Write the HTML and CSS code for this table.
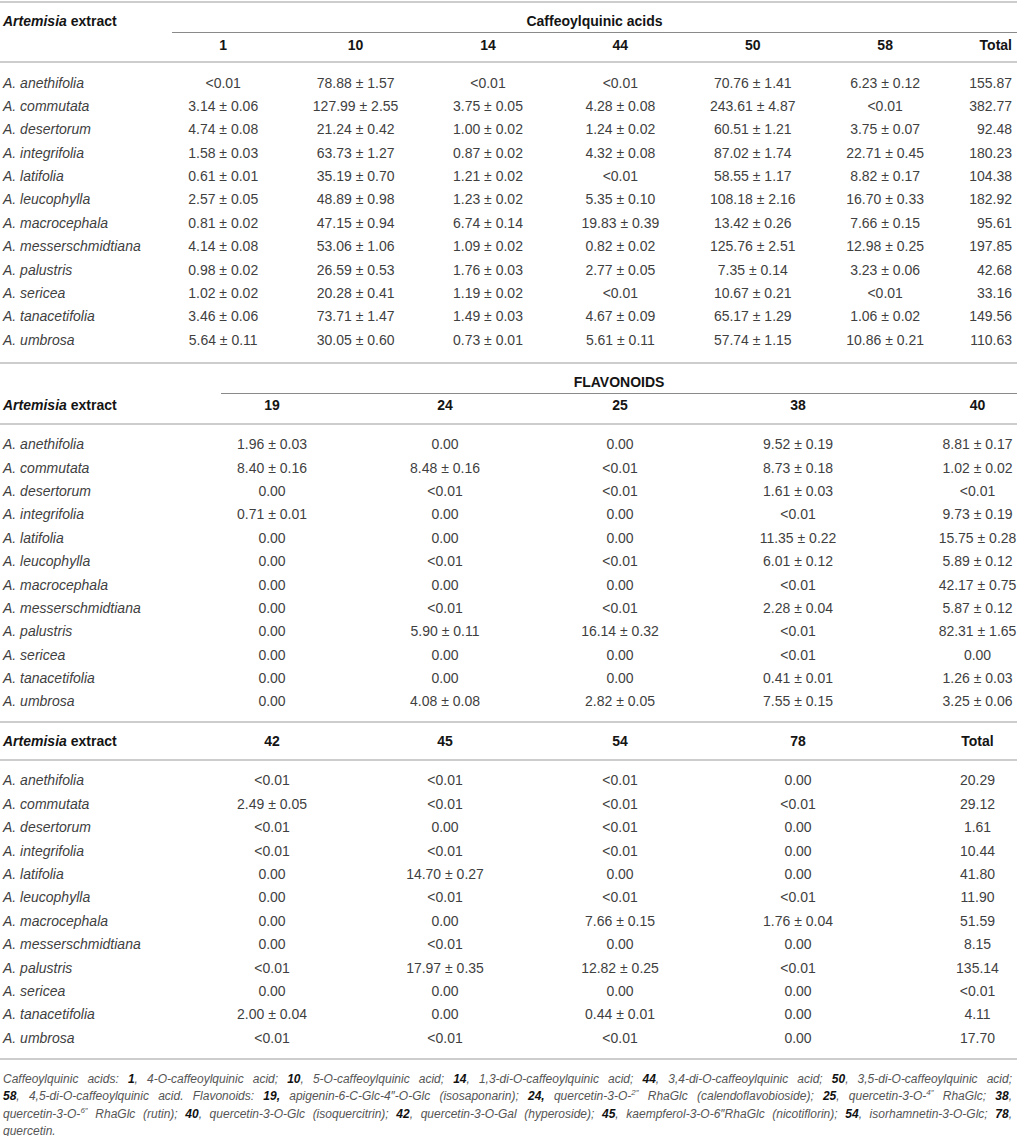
FILE: index.html
```html
<!DOCTYPE html>
<html lang="en">
<head>
<meta charset="utf-8">
<title>Artemisia extract – Caffeoylquinic acids and flavonoids</title>
<link rel="stylesheet" href="styles.css">
</head>
<body>
<div class="wrap">

  <section class="sec sec1">
    <div class="grp-row g-c">
      <div class="hname"><i>Artemisia</i> extract</div>
      <div class="grp">Caffeoylquinic acids</div>
    </div>
    <div class="hrow g1 h-c">
      <span class="name"></span><span>1</span><span>10</span><span>14</span><span>44</span><span>50</span><span>58</span><span class="tot">Total</span>
    </div>
    <div class="body b1">
      <div class="row g1"><span class="name">A. anethifolia</span><span>&lt;0.01</span><span>78.88 ± 1.57</span><span>&lt;0.01</span><span>&lt;0.01</span><span>70.76 ± 1.41</span><span>6.23 ± 0.12</span><span class="tot">155.87</span></div>
      <div class="row g1"><span class="name">A. commutata</span><span>3.14 ± 0.06</span><span>127.99 ± 2.55</span><span>3.75 ± 0.05</span><span>4.28 ± 0.08</span><span>243.61 ± 4.87</span><span>&lt;0.01</span><span class="tot">382.77</span></div>
      <div class="row g1"><span class="name">A. desertorum</span><span>4.74 ± 0.08</span><span>21.24 ± 0.42</span><span>1.00 ± 0.02</span><span>1.24 ± 0.02</span><span>60.51 ± 1.21</span><span>3.75 ± 0.07</span><span class="tot">92.48</span></div>
      <div class="row g1"><span class="name">A. integrifolia</span><span>1.58 ± 0.03</span><span>63.73 ± 1.27</span><span>0.87 ± 0.02</span><span>4.32 ± 0.08</span><span>87.02 ± 1.74</span><span>22.71 ± 0.45</span><span class="tot">180.23</span></div>
      <div class="row g1"><span class="name">A. latifolia</span><span>0.61 ± 0.01</span><span>35.19 ± 0.70</span><span>1.21 ± 0.02</span><span>&lt;0.01</span><span>58.55 ± 1.17</span><span>8.82 ± 0.17</span><span class="tot">104.38</span></div>
      <div class="row g1"><span class="name">A. leucophylla</span><span>2.57 ± 0.05</span><span>48.89 ± 0.98</span><span>1.23 ± 0.02</span><span>5.35 ± 0.10</span><span>108.18 ± 2.16</span><span>16.70 ± 0.33</span><span class="tot">182.92</span></div>
      <div class="row g1"><span class="name">A. macrocephala</span><span>0.81 ± 0.02</span><span>47.15 ± 0.94</span><span>6.74 ± 0.14</span><span>19.83 ± 0.39</span><span>13.42 ± 0.26</span><span>7.66 ± 0.15</span><span class="tot">95.61</span></div>
      <div class="row g1"><span class="name">A. messerschmidtiana</span><span>4.14 ± 0.08</span><span>53.06 ± 1.06</span><span>1.09 ± 0.02</span><span>0.82 ± 0.02</span><span>125.76 ± 2.51</span><span>12.98 ± 0.25</span><span class="tot">197.85</span></div>
      <div class="row g1"><span class="name">A. palustris</span><span>0.98 ± 0.02</span><span>26.59 ± 0.53</span><span>1.76 ± 0.03</span><span>2.77 ± 0.05</span><span>7.35 ± 0.14</span><span>3.23 ± 0.06</span><span class="tot">42.68</span></div>
      <div class="row g1"><span class="name">A. sericea</span><span>1.02 ± 0.02</span><span>20.28 ± 0.41</span><span>1.19 ± 0.02</span><span>&lt;0.01</span><span>10.67 ± 0.21</span><span>&lt;0.01</span><span class="tot">33.16</span></div>
      <div class="row g1"><span class="name">A. tanacetifolia</span><span>3.46 ± 0.06</span><span>73.71 ± 1.47</span><span>1.49 ± 0.03</span><span>4.67 ± 0.09</span><span>65.17 ± 1.29</span><span>1.06 ± 0.02</span><span class="tot">149.56</span></div>
      <div class="row g1"><span class="name">A. umbrosa</span><span>5.64 ± 0.11</span><span>30.05 ± 0.60</span><span>0.73 ± 0.01</span><span>5.61 ± 0.11</span><span>57.74 ± 1.15</span><span>10.86 ± 0.21</span><span class="tot">110.63</span></div>
    </div>
  </section>

  <section class="sec sec2">
    <div class="grp-row g-f">
      <div class="hname"></div>
      <div class="grp">FLAVONOIDS</div>
    </div>
    <div class="hrow g2 h-f">
      <span class="name"><i>Artemisia</i> extract</span><span>19</span><span>24</span><span>25</span><span>38</span><span class="last">40</span>
    </div>
    <div class="body b2">
      <div class="row g2"><span class="name">A. anethifolia</span><span>1.96 ± 0.03</span><span>0.00</span><span>0.00</span><span>9.52 ± 0.19</span><span class="last">8.81 ± 0.17</span></div>
      <div class="row g2"><span class="name">A. commutata</span><span>8.40 ± 0.16</span><span>8.48 ± 0.16</span><span>&lt;0.01</span><span>8.73 ± 0.18</span><span class="last">1.02 ± 0.02</span></div>
      <div class="row g2"><span class="name">A. desertorum</span><span>0.00</span><span>&lt;0.01</span><span>&lt;0.01</span><span>1.61 ± 0.03</span><span class="last">&lt;0.01</span></div>
      <div class="row g2"><span class="name">A. integrifolia</span><span>0.71 ± 0.01</span><span>0.00</span><span>0.00</span><span>&lt;0.01</span><span class="last">9.73 ± 0.19</span></div>
      <div class="row g2"><span class="name">A. latifolia</span><span>0.00</span><span>0.00</span><span>0.00</span><span>11.35 ± 0.22</span><span class="last">15.75 ± 0.28</span></div>
      <div class="row g2"><span class="name">A. leucophylla</span><span>0.00</span><span>&lt;0.01</span><span>&lt;0.01</span><span>6.01 ± 0.12</span><span class="last">5.89 ± 0.12</span></div>
      <div class="row g2"><span class="name">A. macrocephala</span><span>0.00</span><span>0.00</span><span>0.00</span><span>&lt;0.01</span><span class="last">42.17 ± 0.75</span></div>
      <div class="row g2"><span class="name">A. messerschmidtiana</span><span>0.00</span><span>&lt;0.01</span><span>&lt;0.01</span><span>2.28 ± 0.04</span><span class="last">5.87 ± 0.12</span></div>
      <div class="row g2"><span class="name">A. palustris</span><span>0.00</span><span>5.90 ± 0.11</span><span>16.14 ± 0.32</span><span>&lt;0.01</span><span class="last">82.31 ± 1.65</span></div>
      <div class="row g2"><span class="name">A. sericea</span><span>0.00</span><span>0.00</span><span>0.00</span><span>&lt;0.01</span><span class="last">0.00</span></div>
      <div class="row g2"><span class="name">A. tanacetifolia</span><span>0.00</span><span>0.00</span><span>0.00</span><span>0.41 ± 0.01</span><span class="last">1.26 ± 0.03</span></div>
      <div class="row g2"><span class="name">A. umbrosa</span><span>0.00</span><span>4.08 ± 0.08</span><span>2.82 ± 0.05</span><span>7.55 ± 0.15</span><span class="last">3.25 ± 0.06</span></div>
    </div>
  </section>

  <section class="sec sec3">
    <div class="hrow g2 h-t">
      <span class="name"><i>Artemisia</i> extract</span><span>42</span><span>45</span><span>54</span><span>78</span><span class="last">Total</span>
    </div>
    <div class="body b3">
      <div class="row g2"><span class="name">A. anethifolia</span><span>&lt;0.01</span><span>&lt;0.01</span><span>&lt;0.01</span><span>0.00</span><span class="last">20.29</span></div>
      <div class="row g2"><span class="name">A. commutata</span><span>2.49 ± 0.05</span><span>&lt;0.01</span><span>&lt;0.01</span><span>&lt;0.01</span><span class="last">29.12</span></div>
      <div class="row g2"><span class="name">A. desertorum</span><span>&lt;0.01</span><span>0.00</span><span>&lt;0.01</span><span>0.00</span><span class="last">1.61</span></div>
      <div class="row g2"><span class="name">A. integrifolia</span><span>&lt;0.01</span><span>&lt;0.01</span><span>&lt;0.01</span><span>0.00</span><span class="last">10.44</span></div>
      <div class="row g2"><span class="name">A. latifolia</span><span>0.00</span><span>14.70 ± 0.27</span><span>0.00</span><span>0.00</span><span class="last">41.80</span></div>
      <div class="row g2"><span class="name">A. leucophylla</span><span>0.00</span><span>&lt;0.01</span><span>&lt;0.01</span><span>&lt;0.01</span><span class="last">11.90</span></div>
      <div class="row g2"><span class="name">A. macrocephala</span><span>0.00</span><span>0.00</span><span>7.66 ± 0.15</span><span>1.76 ± 0.04</span><span class="last">51.59</span></div>
      <div class="row g2"><span class="name">A. messerschmidtiana</span><span>0.00</span><span>&lt;0.01</span><span>0.00</span><span>0.00</span><span class="last">8.15</span></div>
      <div class="row g2"><span class="name">A. palustris</span><span>&lt;0.01</span><span>17.97 ± 0.35</span><span>12.82 ± 0.25</span><span>&lt;0.01</span><span class="last">135.14</span></div>
      <div class="row g2"><span class="name">A. sericea</span><span>0.00</span><span>0.00</span><span>0.00</span><span>0.00</span><span class="last">&lt;0.01</span></div>
      <div class="row g2"><span class="name">A. tanacetifolia</span><span>2.00 ± 0.04</span><span>0.00</span><span>0.44 ± 0.01</span><span>0.00</span><span class="last">4.11</span></div>
      <div class="row g2"><span class="name">A. umbrosa</span><span>&lt;0.01</span><span>&lt;0.01</span><span>&lt;0.01</span><span>0.00</span><span class="last">17.70</span></div>
    </div>
  </section>

  <footer class="note">
    <div class="jl">Caffeoylquinic acids: <b>1</b>, 4-O-caffeoylquinic acid; <b>10</b>, 5-O-caffeoylquinic acid; <b>14</b>, 1,3-di-O-caffeoylquinic acid; <b>44</b>, 3,4-di-O-caffeoylquinic acid; <b>50</b>, 3,5-di-O-caffeoylquinic acid;</div>
    <div class="jl"><b>58</b>, 4,5-di-O-caffeoylquinic acid. Flavonoids: <b>19,</b> apigenin-6-C-Glc-4″-O-Glc (isosaponarin); <b>24,</b> quercetin-3-O-<sup>2″</sup> RhaGlc (calendoflavobioside); <b>25</b>, quercetin-3-O-<sup>4″</sup> RhaGlc; <b>38</b>,</div>
    <div class="jl">quercetin-3-O-<sup>6″</sup> RhaGlc (rutin); <b>40</b>, quercetin-3-O-Glc (isoquercitrin); <b>42</b>, quercetin-3-O-Gal (hyperoside); <b>45</b>, kaempferol-3-O-6″RhaGlc (nicotiflorin); <b>54</b>, isorhamnetin-3-O-Glc; <b>78</b>,</div>
    <div class="ll">quercetin.</div>
  </footer>

</div>
</body>
</html>
```

FILE: styles.css
```css
html, body {
  margin: 0;
  padding: 0;
  background: #ffffff;
}

body {
  font-family: "Liberation Sans", Arial, Helvetica, sans-serif;
  font-size: 14px;
  color: #3f3f3f;
}

.wrap {
  width: 1017px;
  padding-top: 1px;
}

.sec1 {
  border-top: 2px solid #cdcdcd;
}

/* group header rows (spanning caption with a short rule under it) */
.grp-row {
  display: grid;
  line-height: 16px;
  font-weight: bold;
  color: #141414;
}

.g-c { grid-template-columns: 172px 1fr; }
.g-f { grid-template-columns: 221px 1fr; }

.grp-row .hname {
  padding: 10px 0 3px 3px;
}

.grp-row .grp {
  padding: 10px 0 3px;
  text-align: center;
  border-bottom: 1px solid #8a8a8a;
}

/* column header rows */
.hrow {
  line-height: 16px;
  font-weight: bold;
  color: #141414;
  border-bottom: 2px solid #cdcdcd;
}

.h-c { padding: 4px 0 8px; }
.h-f { padding: 3px 0 10px; }
.h-t { padding: 10.5px 0 10px; }

/* grids */
.g1,
.g2 {
  display: grid;
  text-align: center;
  white-space: nowrap;
}

.g1 { grid-template-columns: 157px repeat(6, 132.4px) 1fr; }
.g2 { grid-template-columns: 184px 176px 170px 180px 176px 1fr; }

.g1 .tot {
  text-align: right;
  padding-right: 5px;
}

.g2 .last {
  padding-left: 52px;
}

.name {
  text-align: left;
  padding-left: 3px;
}

/* bodies */
.body {
  border-bottom: 2px solid #cdcdcd;
}

.b1 { padding: 8.5px 0 10px; }
.b2 { padding: 8px 0 7px; }
.b3 { padding: 8px 0 7.5px; }

.row {
  line-height: 23.4px;
  height: 23.4px;
}

.row .name {
  font-style: italic;
}

/* footnote */
.note {
  padding: 11px 5px 0 3px;
  font-size: 12px;
  line-height: 17.5px;
  font-style: italic;
  color: #555555;
}

.note b {
  font-weight: bold;
  color: #111111;
}

.note sup {
  font-size: 8px;
  line-height: 0;
  vertical-align: 5px;
}

.jl {
  text-align: justify;
  text-align-last: justify;
}

.ll {
  text-align: left;
}
```
